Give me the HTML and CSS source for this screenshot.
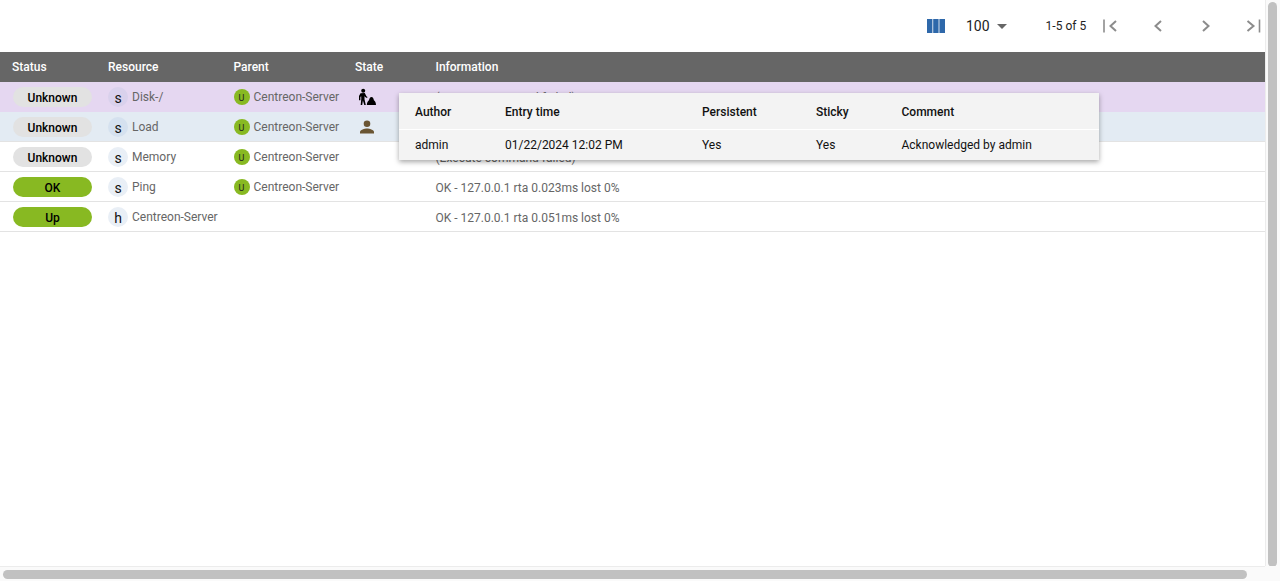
FILE: index.html
```html
<!DOCTYPE html>
<html lang="en">
<head>
<meta charset="utf-8">
<title>Resources</title>
<link rel="stylesheet" href="styles.css">
</head>
<body>
<div class="app">
  <main class="main">
    <div class="toolbar">
      <svg class="cols-icon" viewBox="0 0 18 14" width="18" height="14"><path d="M0 0h5.400v14H0zM6.200 0h5.400v14H6.200zM12.400 0H18v14h-5.600z"/></svg>
      <span class="per-page">100</span>
      <span class="caret"></span>
      <span class="range">1-5 of 5</span>
      <div class="pager">
        <svg viewBox="0 0 16 16" width="16" height="16"><path d="M2 1.500v13" class="bar"/><path d="M14 3 8.500 8l5.500 5"/></svg>
        <svg viewBox="0 0 16 16" width="16" height="16"><path d="M11 3 5.500 8l5.500 5"/></svg>
        <svg viewBox="0 0 16 16" width="16" height="16"><path d="M5 3l5.500 5L5 13"/></svg>
        <svg viewBox="0 0 16 16" width="16" height="16"><path d="M1.500 3 7.500 8l-6 5"/><path d="M13.500 1.500v13" class="bar"/></svg>
      </div>
    </div>
    <div class="table">
      <div class="row head">
        <div>Status</div><div>Resource</div><div>Parent</div><div>State</div><div>Information</div>
      </div>
      <div class="row purple">
        <div><span class="pill grey">Unknown</span></div>
        <div class="res"><span class="badge violet">s</span>Disk-/</div>
        <div class="res"><span class="dot">U</span>Centreon-Server</div>
        <div class="state">
          <svg viewBox="0 0 18 18" width="18" height="18"><circle cx="5.200" cy="2.800" r="2"/><path d="M2.500 5.200 6.800 5l1.600 3.200 1.100.7-.5 1-1.900-1-.6-1v3.400l1.300 5.700H6.300L4.900 12.500 4.200 17H2.700l.6-6.600-.2-2.400-.7 1.300v2.900H1V8z"/><path d="M8.800 17c.2-2.500 1-4 2.200-4.800.4-1.800 1-3 2.500-3.200 1.500.2 2 1.400 2.400 3.200 1.200.8 2 2.300 2.100 4.800z"/></svg>
        </div>
        <div class="info">(Execute command failed)</div>
      </div>
      <div class="row blue">
        <div><span class="pill grey">Unknown</span></div>
        <div class="res"><span class="badge pale">s</span>Load</div>
        <div class="res"><span class="dot">U</span>Centreon-Server</div>
        <div class="state">
          <svg class="person" viewBox="0 0 16 16" width="16" height="16"><circle cx="8" cy="4.700" r="3.300"/><path d="M1 14.500v-1.500c0-2.400 4.600-3.600 7-3.600s7 1.200 7 3.600v1.500z"/></svg>
        </div>
        <div class="info">(Execute command failed)</div>
      </div>
      <div class="row">
        <div><span class="pill grey">Unknown</span></div>
        <div class="res"><span class="badge">s</span>Memory</div>
        <div class="res"><span class="dot">U</span>Centreon-Server</div>
        <div></div>
        <div class="info">(Execute command failed)</div>
      </div>
      <div class="row">
        <div><span class="pill green">OK</span></div>
        <div class="res"><span class="badge">s</span>Ping</div>
        <div class="res"><span class="dot">U</span>Centreon-Server</div>
        <div></div>
        <div class="info">OK - 127.0.0.1 rta 0.023ms lost 0%</div>
      </div>
      <div class="row">
        <div><span class="pill green">Up</span></div>
        <div class="res"><span class="badge">h</span>Centreon-Server</div>
        <div></div>
        <div></div>
        <div class="info">OK - 127.0.0.1 rta 0.051ms lost 0%</div>
      </div>
    </div>
  </main>
  <div class="vtrack"><div class="vthumb"></div></div>
  <div class="htrack"><div class="hthumb"></div></div>
  <div class="corner"></div>
  <div class="popover">
    <div class="pop-row pop-head"><div>Author</div><div>Entry time</div><div>Persistent</div><div>Sticky</div><div>Comment</div></div>
    <div class="pop-row"><div>admin</div><div>01/22/2024 12:02 PM</div><div>Yes</div><div>Yes</div><div>Acknowledged by admin</div></div>
  </div>
</div>
</body>
</html>
```
FILE: styles.css
```css
* { box-sizing: border-box; }
html, body { margin: 0; height: 100%; overflow: hidden; }
body { font-family: Roboto, "Liberation Sans", sans-serif; font-size: 12px; color: #000; background: #fff; }

.app {
  position: relative;
  display: grid;
  grid-template-columns: 1fr 15px;
  grid-template-rows: 1fr 15px;
  width: 1280px;
  height: 581px;
}
.main { min-width: 0; overflow: hidden; }

.toolbar { display: flex; align-items: center; height: 52px; padding-left: 927px; }
.cols-icon { fill: #2e68aa; margin-bottom: 1px; }
.per-page { margin-left: 21px; font-size: 14px; color: #222; }
.caret { width: 0; height: 0; margin-left: 7px; border: 5px solid transparent; border-top-color: #666; border-bottom: 0; }
.range { margin-left: 39px; color: #222; }
.pager { display: flex; gap: 32px; margin-left: 16px; }
.pager svg { fill: none; stroke: #8c8c8c; stroke-width: 2; }
.pager .bar { stroke-width: 1.600; }

.row {
  display: grid;
  grid-template-columns: 108px 125.500px 121.500px 80.500px 1fr;
  align-items: center;
  height: 30px;
  padding-top: 1px;
  border-bottom: 1px solid #e3e3e3;
  color: #666;
}
.row > div:first-child { padding-left: 13px; }
.head { padding: 0 0 1px; background: #666; color: #fff; font-weight: 500; border-bottom: 0; }
.head > div:first-child { padding-left: 12px; }
.purple { background: #e5d7f1; border-bottom-color: #e5d7f1; }
.blue { background: #e3ebf3; }

.pill {
  display: block;
  width: 79px;
  height: 20px;
  padding-top: 1px;
  border-radius: 10px;
  color: #000;
  font-weight: 500;
  line-height: 20px;
  text-align: center;
}
.grey { background: #e2e2e2; }
.green { background: #88b922; }

.res { display: flex; align-items: center; white-space: nowrap; }
.badge {
  display: flex;
  align-items: center;
  justify-content: center;
  width: 20px;
  height: 20px;
  margin-right: 4px;
  padding-top: 1px;
  border-radius: 50%;
  background: #e9eff6;
  color: #111;
  font-size: 14px;
}
.violet { background: #d9d1ec; }
.pale { background: #d5e1ef; }
.dot {
  display: flex;
  align-items: center;
  justify-content: center;
  width: 16px;
  height: 16px;
  margin-right: 4px;
  padding-top: 1px;
  border-radius: 50%;
  background: #88b922;
  color: #222;
  font-size: 9px;
}
.state { display: flex; padding-left: 3px; color: #000; }
.state svg { fill: #000; }
.state .person { fill: #6a5533; margin-left: 1px; }
.info { padding-top: 1px; white-space: nowrap; }

.vtrack { background: #fafafa; border-left: 1px solid #ececec; padding: 2px 3px 0 2px; }
.vthumb { height: 565px; margin-bottom: -20px; background: #c1c1c1; border-radius: 5px; }
.htrack { background: #fafafa; border-top: 1px solid #ececec; padding: 3px 0 0 3px; }
.hthumb { width: 1244px; height: 9px; background: #c1c1c1; border-radius: 5px; }
.corner { background: #fafafa; }

.popover {
  position: absolute;
  left: 399px;
  top: 93px;
  width: 700px;
  height: 67px;
  background: #f3f3f3;
  color: #111;
  box-shadow: 0 2px 5px rgba(0,0,0,.35);
}
.pop-row {
  display: grid;
  grid-template-columns: 90px 197px 114px 85.500px 1fr;
  align-items: center;
  height: 30px;
  padding-left: 16px;
}
.pop-head { height: 37px; padding-top: 2px; font-weight: 500; border-bottom: 1px solid #fff; }
```
